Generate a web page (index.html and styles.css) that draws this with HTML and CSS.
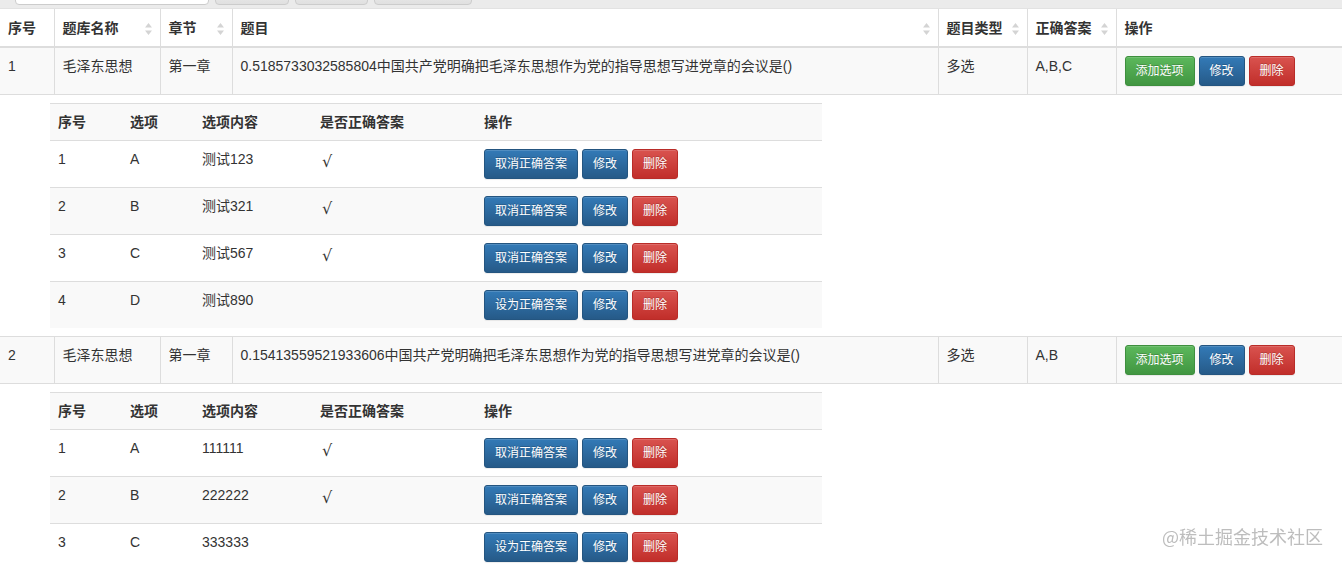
FILE: index.html
```html
<!DOCTYPE html>
<html lang="zh-CN">
<head>
    <meta charset="UTF-8">
    <meta name="viewport" content="width=device-width, initial-scale=1.0">
    <title>题目管理</title>
    <link rel="stylesheet" href="styles.css">
</head>
<body>
    <div class="toolbar">
        <div class="search-box"></div>
        <div class="tool-btn tool-btn-1"></div>
        <div class="tool-btn tool-btn-2"></div>
        <div class="tool-btn tool-btn-3"></div>
    </div>

    <table class="table table-main">
        <colgroup>
            <col style="width: 54px">
            <col style="width: 106px">
            <col style="width: 72px">
            <col style="width: 706px">
            <col style="width: 89px">
            <col style="width: 89px">
            <col style="width: 226px">
        </colgroup>
        <thead>
            <tr>
                <th>序号</th>
                <th><div class="th-inner">题库名称<svg class="sort" width="7" height="12" viewBox="0 0 7 12"><path d="M3.5 0L7 4.5H0z M0 7.5H7L3.5 12z" fill="#d4d4d4"/></svg></div></th>
                <th><div class="th-inner">章节<svg class="sort" width="7" height="12" viewBox="0 0 7 12"><path d="M3.5 0L7 4.5H0z M0 7.5H7L3.5 12z" fill="#d4d4d4"/></svg></div></th>
                <th><div class="th-inner">题目<svg class="sort" width="7" height="12" viewBox="0 0 7 12"><path d="M3.5 0L7 4.5H0z M0 7.5H7L3.5 12z" fill="#d4d4d4"/></svg></div></th>
                <th><div class="th-inner">题目类型<svg class="sort" width="7" height="12" viewBox="0 0 7 12"><path d="M3.5 0L7 4.5H0z M0 7.5H7L3.5 12z" fill="#d4d4d4"/></svg></div></th>
                <th><div class="th-inner">正确答案<svg class="sort" width="7" height="12" viewBox="0 0 7 12"><path d="M3.5 0L7 4.5H0z M0 7.5H7L3.5 12z" fill="#d4d4d4"/></svg></div></th>
                <th>操作</th>
            </tr>
        </thead>
        <tbody>
            <tr class="row-stripe">
                <td>1</td>
                <td>毛泽东思想</td>
                <td>第一章</td>
                <td>0.5185733032585804中国共产党明确把毛泽东思想作为党的指导思想写进党章的会议是()</td>
                <td>多选</td>
                <td>A,B,C</td>
                <td>
                    <div class="btn-group">
                        <button class="btn btn-success">添加选项</button>
                        <button class="btn btn-primary">修改</button>
                        <button class="btn btn-danger">删除</button>
                    </div>
                </td>
            </tr>
            <tr class="detail-view">
                <td colspan="7">
                    <table class="table table-sub">
                        <colgroup>
                            <col style="width: 72px">
                            <col style="width: 72px">
                            <col style="width: 118px">
                            <col style="width: 164px">
                            <col style="width: 346px">
                        </colgroup>
                        <thead>
                            <tr><th>序号</th><th>选项</th><th>选项内容</th><th>是否正确答案</th><th>操作</th></tr>
                        </thead>
                        <tbody>
                            <tr>
                                <td>1</td><td>A</td><td>测试123</td><td><span class="check">√</span></td>
                                <td><div class="btn-group"><button class="btn btn-primary">取消正确答案</button><button class="btn btn-primary">修改</button><button class="btn btn-danger">删除</button></div></td>
                            </tr>
                            <tr>
                                <td>2</td><td>B</td><td>测试321</td><td><span class="check">√</span></td>
                                <td><div class="btn-group"><button class="btn btn-primary">取消正确答案</button><button class="btn btn-primary">修改</button><button class="btn btn-danger">删除</button></div></td>
                            </tr>
                            <tr>
                                <td>3</td><td>C</td><td>测试567</td><td><span class="check">√</span></td>
                                <td><div class="btn-group"><button class="btn btn-primary">取消正确答案</button><button class="btn btn-primary">修改</button><button class="btn btn-danger">删除</button></div></td>
                            </tr>
                            <tr>
                                <td>4</td><td>D</td><td>测试890</td><td></td>
                                <td><div class="btn-group"><button class="btn btn-primary">设为正确答案</button><button class="btn btn-primary">修改</button><button class="btn btn-danger">删除</button></div></td>
                            </tr>
                        </tbody>
                    </table>
                </td>
            </tr>
            <tr class="row-stripe">
                <td>2</td>
                <td>毛泽东思想</td>
                <td>第一章</td>
                <td>0.15413559521933606中国共产党明确把毛泽东思想作为党的指导思想写进党章的会议是()</td>
                <td>多选</td>
                <td>A,B</td>
                <td>
                    <div class="btn-group">
                        <button class="btn btn-success">添加选项</button>
                        <button class="btn btn-primary">修改</button>
                        <button class="btn btn-danger">删除</button>
                    </div>
                </td>
            </tr>
            <tr class="detail-view">
                <td colspan="7">
                    <table class="table table-sub">
                        <colgroup>
                            <col style="width: 72px">
                            <col style="width: 72px">
                            <col style="width: 118px">
                            <col style="width: 164px">
                            <col style="width: 346px">
                        </colgroup>
                        <thead>
                            <tr><th>序号</th><th>选项</th><th>选项内容</th><th>是否正确答案</th><th>操作</th></tr>
                        </thead>
                        <tbody>
                            <tr>
                                <td>1</td><td>A</td><td>111111</td><td><span class="check">√</span></td>
                                <td><div class="btn-group"><button class="btn btn-primary">取消正确答案</button><button class="btn btn-primary">修改</button><button class="btn btn-danger">删除</button></div></td>
                            </tr>
                            <tr>
                                <td>2</td><td>B</td><td>222222</td><td><span class="check">√</span></td>
                                <td><div class="btn-group"><button class="btn btn-primary">取消正确答案</button><button class="btn btn-primary">修改</button><button class="btn btn-danger">删除</button></div></td>
                            </tr>
                            <tr>
                                <td>3</td><td>C</td><td>333333</td><td></td>
                                <td><div class="btn-group"><button class="btn btn-primary">设为正确答案</button><button class="btn btn-primary">修改</button><button class="btn btn-danger">删除</button></div></td>
                            </tr>
                        </tbody>
                    </table>
                </td>
            </tr>
        </tbody>
    </table>

    <div class="watermark">@稀土掘金技术社区</div>
</body>
</html>
```

FILE: styles.css
```css
body {
    font-family: "Liberation Sans", Arial, "Noto Sans CJK SC", sans-serif;
    font-size: 14px;
    line-height: 20px;
    color: #333;
    margin: 0;
    padding: 0;
    background: #fff;
    overflow: hidden;
}

/* toolbar strip, only its lower edge is in view */
.toolbar {
    display: flex;
    align-items: flex-end;
    gap: 6px;
    height: 9px;
    padding-left: 15px;
    background: #ebebeb;
    border-bottom: 1px solid #e2e2e2;
    box-sizing: border-box;
    overflow: hidden;
}
.search-box {
    width: 194px;
    height: 34px;
    flex: none;
    margin-bottom: 3px;
    background: #fff;
    border: 1px solid #ccc;
    border-radius: 4px;
    box-sizing: border-box;
}
.tool-btn {
    height: 34px;
    flex: none;
    margin-bottom: 3px;
    background: linear-gradient(#fff, #e0e0e0);
    border: 1px solid #ccc;
    border-radius: 4px;
    box-sizing: border-box;
}
.tool-btn-1 { width: 74px; }
.tool-btn-2 { width: 73px; }
.tool-btn-3 { width: 98px; }

.table {
    border-collapse: collapse;
    border-spacing: 0;
    table-layout: fixed;
}
.table th,
.table td {
    padding: 8px;
    text-align: left;
    vertical-align: top;
    white-space: nowrap;
}
.table th {
    font-weight: bold;
}

.table-main {
    width: 1342px;
}
.table-main > thead > tr > th {
    border-bottom: 2px solid #ddd;
    border-left: 1px solid #ddd;
    padding-top: 9px;
}
.table-main > thead > tr > th:first-child,
.table-main > tbody > tr > td:first-child {
    border-left: none;
}
.table-main > tbody > tr > td {
    border-top: 1px solid #ddd;
    border-left: 1px solid #ddd;
}
.table-main > tbody > tr.row-stripe > td {
    background: #f9f9f9;
}
.table-main > tbody > tr.detail-view > td {
    padding: 8px 8px 8px 50px;
    background: #fff;
}

.th-inner {
    display: flex;
    justify-content: space-between;
    align-items: center;
}
.sort {
    flex: none;
    margin-top: 1px;
}

.table-sub {
    width: 772px;
}
.table-sub > thead > tr > th {
    background: #f9f9f9;
    border-top: 1px solid #ddd;
    border-bottom: 1px solid #ddd;
}
.table-sub > tbody > tr > td {
    border-top: 1px solid #ddd;
    background: #fff;
}
.table-sub > tbody > tr:first-child > td {
    border-top: none;
}
.table-sub > tbody > tr:nth-child(even) > td {
    background: #f9f9f9;
}

.check {
    display: inline-block;
    font-family: "DejaVu Sans", sans-serif;
    font-size: 16px;
    margin-top: 3px;
    margin-left: 2px;
}

.btn-group {
    display: flex;
    gap: 4px;
}
.btn {
    font-family: "Liberation Sans", Arial, "Noto Sans CJK SC", sans-serif;
    font-size: 12px;
    line-height: 18px;
    padding: 5px 10px;
    border-radius: 3px;
    border: 1px solid transparent;
    color: #fff;
    cursor: pointer;
    text-shadow: 0 -1px 0 rgba(0, 0, 0, .2);
    box-shadow: inset 0 1px 0 rgba(255, 255, 255, .15), 0 1px 1px rgba(0, 0, 0, .075);
}
.btn-primary {
    background: linear-gradient(#337ab7, #265a88);
    border-color: #245580;
}
.btn-success {
    background: linear-gradient(#5cb85c, #419641);
    border-color: #3e8f3e;
}
.btn-danger {
    background: linear-gradient(#d9534f, #c12e2a);
    border-color: #b92c28;
}

.watermark {
    position: fixed;
    right: 19px;
    bottom: 16px;
    font-family: "Noto Sans CJK SC", sans-serif;
    font-size: 18px;
    line-height: 24px;
    color: #bdbdbd;
}
```
